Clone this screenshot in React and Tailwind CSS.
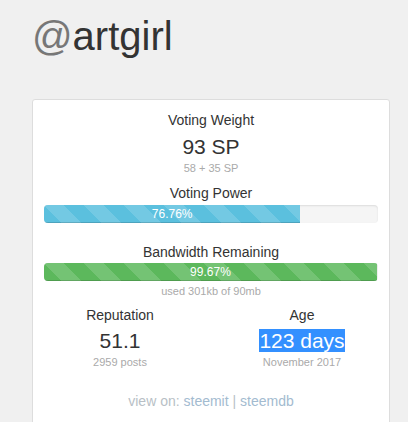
const STRIPES =
  "bg-[linear-gradient(45deg,rgba(255,255,255,.15)_25%,transparent_25%,transparent_50%,rgba(255,255,255,.15)_50%,rgba(255,255,255,.15)_75%,transparent_75%,transparent)] bg-[length:40px_40px]";

function Bar({ value, color }) {
  return (
    <div className="h-[18px] rounded-[4px] bg-[#f5f5f5] shadow-[inset_0_1px_2px_rgba(0,0,0,0.1)] overflow-hidden">
      <div
        className={`h-full ${color} ${STRIPES} shadow-[inset_0_-1px_0_rgba(0,0,0,0.15)] text-white text-[12px] leading-[18px] text-center`}
        style={{ width: `${value}%` }}
      >
        {value.toFixed(2)}%
      </div>
    </div>
  );
}

export default function App() {
  return (
    <div className="min-h-[422px] bg-[#f0f0f0] font-['Liberation_Sans',Arial,sans-serif] text-[#333] pl-[32px] pr-[18px] pt-[14px]">
      {/* ── Header ── */}
      <h1 className="text-[40px] leading-[44px] tracking-normal">
        <span className="text-[#777]">@</span>artgirl
      </h1>

      {/* ── Stats card ── */}
      <div className="mt-[41px] bg-white border border-[#ddd] rounded-[3px] px-[11px] pt-[10px] pb-[40px] text-center">
        <div className="text-[14px] leading-[20px]">Voting Weight</div>
        <div className="mt-[4px] text-[21px] leading-[26px]">93 SP</div>
        <div className="mt-[1px] text-[11px] leading-[14px] text-[#aaa]">58 + 35 SP</div>

        <div className="mt-[8px] text-[14px] leading-[20px]">Voting Power</div>
        <div className="mt-[2px]">
          <Bar value={76.76} color="bg-[#5bc0de]" />
        </div>

        <div className="mt-[19px] text-[14px] leading-[20px]">Bandwidth Remaining</div>
        <div className="mt-[1px]">
          <Bar value={99.67} color="bg-[#5cb85c]" />
        </div>
        <div className="mt-[3px] text-[11px] leading-[14px] text-[#aaa]">used 301kb of 90mb</div>

        <div className="-mx-[15px] mt-[7px] grid grid-cols-2">
          <div>
            <div className="text-[14px] leading-[20px]">Reputation</div>
            <div className="mt-[4px] text-[21px] leading-[24px]">51.1</div>
            <div className="mt-[2px] text-[11px] leading-[14px] text-[#aaa]">2959 posts</div>
          </div>
          <div>
            <div className="text-[14px] leading-[20px]">Age</div>
            <div className="mt-[4px] text-[21px] leading-[24px]">
              <span className="bg-[#3390ff] text-white">123 days</span>
            </div>
            <div className="mt-[2px] text-[11px] leading-[14px] text-[#aaa]">November 2017</div>
          </div>
        </div>

        <div className="mt-[22px] text-[14px] leading-[20px] text-[#b8bfc6]">
          view on: <span className="text-[#a3bbd0]">steemit</span> | <span className="text-[#a3bbd0]">steemdb</span>
        </div>
      </div>
    </div>
  );
}
